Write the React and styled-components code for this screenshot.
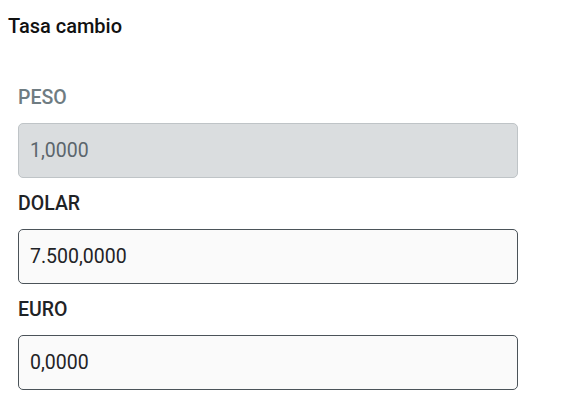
import React from "react";
import styled, { createGlobalStyle } from "styled-components";

const GlobalStyle = createGlobalStyle`
  body {
    margin: 0;
    background: #ffffff;
    font-family: Roboto, "Liberation Sans", sans-serif;
  }
`;

const rates = [
  { code: "PESO", value: "1,0000", disabled: true },
  { code: "DOLAR", value: "7.500,0000" },
  { code: "EURO", value: "0,0000" },
];

export default function App() {
  return (
    <Page>
      <GlobalStyle />
      <Title>Tasa cambio</Title>
      <Form>
        {rates.map((r) => (
          <Field key={r.code}>
            <Label disabled={r.disabled}>{r.code}</Label>
            <Input
              type="text"
              defaultValue={r.value}
              disabled={r.disabled}
              readOnly
            />
          </Field>
        ))}
      </Form>
    </Page>
  );
}

const Page = styled.div`
  padding: 14px 8px;
`;

const Title = styled.h1`
  margin: 0;
  font-size: 20px;
  font-weight: 500;
  line-height: 24px;
  color: #111;
`;

const Form = styled.div`
  display: flex;
  flex-direction: column;
  gap: 16px;
  padding: 50px 10px 0;
  width: 500px;
`;

const Field = styled.div`
  display: flex;
  flex-direction: column;
  gap: 16px;
`;

const Label = styled.label`
  font-size: 19.5px;
  font-weight: 500;
  line-height: 19px;
  color: ${(p) => (p.disabled ? "#6f7c82" : "#1f2326")};
`;

const Input = styled.input`
  box-sizing: border-box;
  width: 100%;
  height: 55px;
  padding: 0 11px;
  font-family: Roboto, "Liberation Sans", sans-serif;
  font-size: 19.5px;
  color: #1f2326;
  background: #fafafa;
  border: 1px solid #4b5359;
  border-radius: 5px;
  outline: none;

  &:disabled {
    background: #dadddf;
    border-color: #bfc4c7;
    color: #5b656c;
    -webkit-text-fill-color: #5b656c;
    opacity: 1;
  }
`;
